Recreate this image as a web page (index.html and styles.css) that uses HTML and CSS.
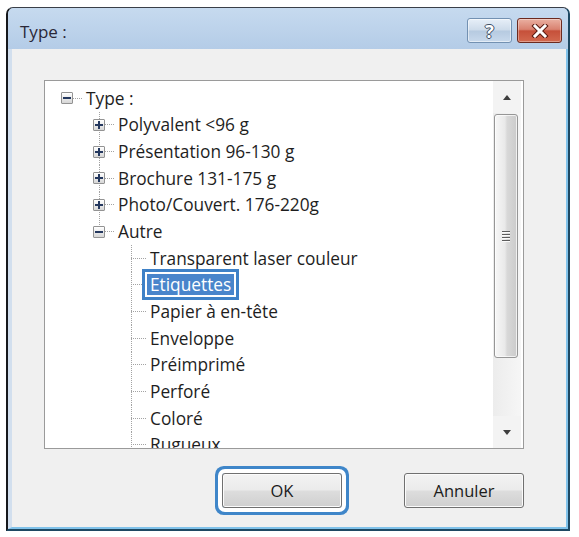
FILE: index.html
```html
<!DOCTYPE html>
<html lang="fr">
<head>
    <meta charset="UTF-8">
    <title>Type :</title>
    <link rel="stylesheet" href="styles.css">
</head>
<body>
    <div class="window">
        <div class="titlebar">
            <span class="title">Type :</span>
            <div class="caption-btns">
                <span class="cap-btn help">?</span>
                <span class="cap-btn close">
                    <svg width="18" height="14" viewBox="0 0 18 14">
                        <path d="M4 2 L14 12 M14 2 L4 12" stroke="#5a1a10" stroke-width="5" stroke-linecap="square"/>
                        <path d="M4 2 L14 12 M14 2 L4 12" stroke="#fff" stroke-width="3" stroke-linecap="square"/>
                    </svg>
                </span>
            </div>
        </div>

        <div class="client">
            <div class="tree-box">
                <div class="tree">
                    <!-- root -->
                    <div class="row">
                        <span class="cell node"><span class="box minus"></span></span>
                        <span class="label">Type :</span>
                    </div>

                    <!-- level 1 -->
                    <div class="row">
                        <span class="cell"></span>
                        <span class="cell node mid"><span class="box plus"></span></span>
                        <span class="label">Polyvalent &lt;96 g</span>
                    </div>
                    <div class="row">
                        <span class="cell"></span>
                        <span class="cell node mid"><span class="box plus"></span></span>
                        <span class="label">Présentation 96-130 g</span>
                    </div>
                    <div class="row">
                        <span class="cell"></span>
                        <span class="cell node mid"><span class="box plus"></span></span>
                        <span class="label">Brochure 131-175 g</span>
                    </div>
                    <div class="row">
                        <span class="cell"></span>
                        <span class="cell node mid"><span class="box plus"></span></span>
                        <span class="label">Photo/Couvert. 176-220g</span>
                    </div>
                    <div class="row">
                        <span class="cell"></span>
                        <span class="cell node end"><span class="box minus"></span></span>
                        <span class="label">Autre</span>
                    </div>

                    <!-- level 2 -->
                    <div class="row">
                        <span class="cell"></span><span class="cell"></span>
                        <span class="cell node mid"></span>
                        <span class="label">Transparent laser couleur</span>
                    </div>
                    <div class="row">
                        <span class="cell"></span><span class="cell"></span>
                        <span class="cell node mid"></span>
                        <span class="label selected">Etiquettes</span>
                    </div>
                    <div class="row">
                        <span class="cell"></span><span class="cell"></span>
                        <span class="cell node mid"></span>
                        <span class="label">Papier à en-tête</span>
                    </div>
                    <div class="row">
                        <span class="cell"></span><span class="cell"></span>
                        <span class="cell node mid"></span>
                        <span class="label">Enveloppe</span>
                    </div>
                    <div class="row">
                        <span class="cell"></span><span class="cell"></span>
                        <span class="cell node mid"></span>
                        <span class="label">Préimprimé</span>
                    </div>
                    <div class="row">
                        <span class="cell"></span><span class="cell"></span>
                        <span class="cell node mid"></span>
                        <span class="label">Perforé</span>
                    </div>
                    <div class="row">
                        <span class="cell"></span><span class="cell"></span>
                        <span class="cell node mid"></span>
                        <span class="label">Coloré</span>
                    </div>
                    <div class="row">
                        <span class="cell"></span><span class="cell"></span>
                        <span class="cell node mid"></span>
                        <span class="label">Rugueux</span>
                    </div>
                </div>

                <div class="scrollbar">
                    <div class="sb-btn"><span class="arrow-up"></span></div>
                    <div class="sb-track">
                        <div class="sb-thumb"><span class="grip"></span></div>
                    </div>
                    <div class="sb-btn"><span class="arrow-down"></span></div>
                </div>
            </div>

            <div class="actions">
                <button class="btn ok">OK</button>
                <button class="btn">Annuler</button>
            </div>
        </div>
    </div>
</body>
</html>
```

FILE: styles.css
```css
* {
    margin: 0;
    padding: 0;
    box-sizing: border-box;
}

body {
    font-family: 'Open Sans', 'Noto Sans', sans-serif;
    background: #ffffff;
    color: #1b1b1b;
}

.window {
    margin: 7px 0 0 6px;
    width: 564px;
    height: 524px;
    display: flex;
    flex-direction: column;
    border-top: 1px solid #3a3f48;
    border-left: 2px solid #16181c;
    border-right: 2px solid #1e4862;
    border-bottom: 2px solid #1e4862;
    border-radius: 7px 7px 0 0;
    background: #bcd2ea;
}

/* title bar */
.titlebar {
    height: 41px;
    display: flex;
    align-items: center;
    padding: 0 6px 0 12px;
    background: linear-gradient(#c6daef, #b4cce7);
    border-radius: 6px 6px 0 0;
}

.title {
    font-size: 17px;
    color: #2a2838;
    margin-top: 6px;
}

.caption-btns {
    margin-left: auto;
    align-self: flex-start;
    margin-top: 10px;
    display: flex;
    gap: 5px;
}

.cap-btn {
    width: 45px;
    height: 25px;
    border-radius: 3px;
    display: flex;
    align-items: center;
    justify-content: center;
}

.help {
    border: 1px solid #7391b2;
    background: linear-gradient(#e7eff8, #cddbea 48%, #b6cae0 52%, #c8d9ec);
    box-shadow: inset 0 0 0 1px rgba(255, 255, 255, 0.5);
    font-size: 18px;
    font-weight: bold;
    color: #ffffff;
    text-shadow: -1px 0 #3d4f66, 1px 0 #3d4f66, 0 -1px #3d4f66, 0 1px #3d4f66;
}

.close {
    border: 1px solid #6c2a1f;
    background: linear-gradient(#eab0a2, #d98270 45%, #c6503a 52%, #d2694f);
    box-shadow: inset 0 0 0 1px rgba(255, 255, 255, 0.35);
}

/* client area */
.client {
    flex: 1;
    display: flex;
    flex-direction: column;
    background: #f0f0f0;
    border-left: 4px solid #d2dfee;
    border-right: 2px solid #80c2ea;
    border-bottom: 2px solid #80c2ea;
    padding: 31px 42px 0 32px;
}

.tree-box {
    width: 480px;
    height: 369px;
    display: flex;
    border: 1px solid #9a9a9a;
    background: #ffffff;
}

.tree {
    flex: 1;
    overflow: hidden;
    padding: 4px 0 0 6px;
    --h: repeating-linear-gradient(to right, #a3a3a3 0 1px, transparent 1px 2px);
    --v: repeating-linear-gradient(to bottom, #a3a3a3 0 1px, transparent 1px 2px);
}

.row {
    height: 26.667px;
    display: flex;
}

.cell {
    width: 32px;
    flex: none;
    display: flex;
    align-items: center;
    background-repeat: no-repeat;
}

.node {
    background-image: var(--h);
    background-size: 16px 1px;
    background-position: 16px 50%;
}

.node.mid {
    background-image: var(--h), var(--v);
    background-size: 16px 1px, 1px 100%;
    background-position: 16px 50%, 16px 0;
}

.node.end {
    background-image: var(--h), var(--v);
    background-size: 16px 1px, 1px 50%;
    background-position: 16px 50%, 16px 0;
}

.box {
    width: 12px;
    height: 12px;
    margin-left: 10px;
    border: 1px solid #939393;
    border-radius: 1px;
    background-repeat: no-repeat;
}

.box.minus {
    background-image: linear-gradient(#24385f, #24385f), linear-gradient(#ffffff, #d6d6d6);
    background-size: 8px 2px, 100% 100%;
    background-position: 1px 4px, 0 0;
}

.box.plus {
    background-image: linear-gradient(#24385f, #24385f), linear-gradient(#24385f, #24385f), linear-gradient(#ffffff, #d6d6d6);
    background-size: 8px 2px, 2px 8px, 100% 100%;
    background-position: 1px 4px, 4px 1px, 0 0;
}

.label {
    align-self: center;
    padding: 0 3px;
    font-size: 17.3px;
    line-height: 21px;
    white-space: nowrap;
    color: #1e1e1e;
}

.label.selected {
    position: relative;
    z-index: 1;
    background: #4985cb;
    color: #ffffff;
    box-shadow: 0 0 0 2px #ffffff, 0 0 0 5px #3e81c7;
}

/* scrollbar */
.scrollbar {
    width: 28px;
    margin-right: 2px;
    display: flex;
    flex-direction: column;
    background: #f3f3f3;
}

.sb-btn {
    height: 32px;
    display: flex;
    align-items: center;
    justify-content: center;
}

.arrow-up {
    border-left: 4px solid transparent;
    border-right: 4px solid transparent;
    border-bottom: 5px solid #3e3e3e;
}

.arrow-down {
    border-left: 4px solid transparent;
    border-right: 4px solid transparent;
    border-top: 5px solid #3e3e3e;
}

.sb-track {
    flex: 1;
    background: linear-gradient(to right, #ececec, #f6f6f6);
}

.sb-thumb {
    height: 244px;
    margin: 1px 3px 0 1px;
    border: 1px solid #969696;
    border-radius: 3px;
    background: linear-gradient(to right, #f7f7f7, #e9e9e9 45%, #d8d8d8 55%, #cbcbcb);
    box-shadow: inset 0 0 0 1px rgba(255, 255, 255, 0.7);
    display: flex;
    align-items: center;
    justify-content: center;
}

.grip {
    width: 8px;
    height: 11px;
    background: repeating-linear-gradient(to bottom, #5c5c5c 0 1px, #fafafa 1px 2px, transparent 2px 3px);
}

/* buttons */
.actions {
    margin-top: 24px;
    width: 480px;
    display: flex;
    justify-content: flex-end;
    gap: 62px;
}

.btn {
    width: 120px;
    height: 35px;
    font-family: inherit;
    font-size: 16.5px;
    color: #1b1b1b;
    border: 1px solid #707070;
    border-radius: 3px;
    background: linear-gradient(#f3f3f3, #ebebeb 48%, #dddddd 52%, #cfcfcf);
    box-shadow: inset 0 0 0 1px #fbfbfb;
}

.btn.ok {
    box-shadow: inset 0 0 0 1px #fbfbfb, 0 0 0 4px #ffffff, 0 0 0 7px #3f86c9;
}
```
